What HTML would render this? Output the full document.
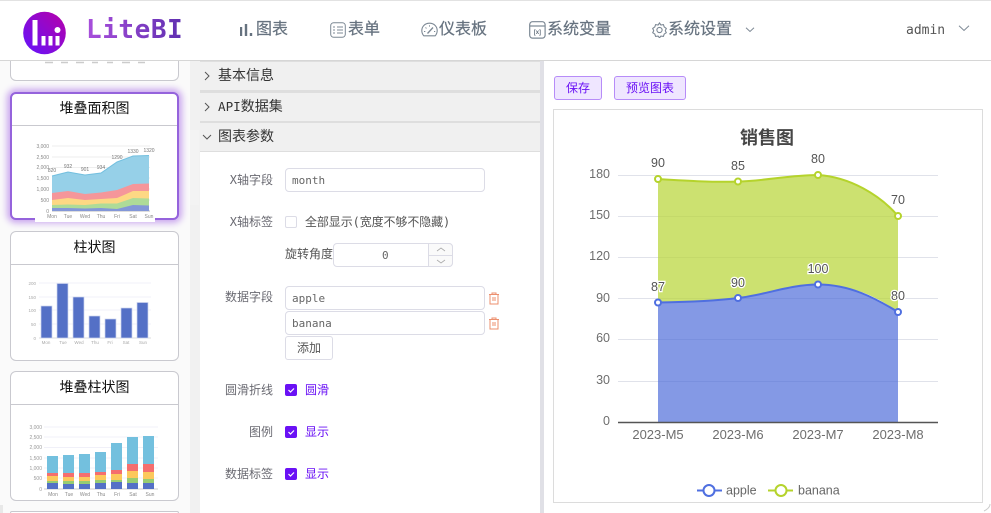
<!DOCTYPE html>
<html><head><meta charset="utf-8">
<style>
*{box-sizing:border-box}
html,body{margin:0;padding:0;width:991px;height:513px;overflow:hidden;background:#fff;font-family:"Liberation Sans","Noto Sans CJK SC",sans-serif}
.abs{position:absolute}
#root{position:relative;width:991px;height:513px;overflow:hidden}
.mono{font-family:"DejaVu Sans Mono","Noto Sans CJK SC",monospace}
.nav{position:absolute;top:19px;font-size:16px;color:#66727f;line-height:22px;white-space:nowrap;-webkit-text-stroke:.2px #66727f}
.card{position:absolute;left:10px;width:169px;background:#fff;border:1px solid #c9c9cf;border-radius:6px;overflow:hidden}
.card .t{height:33px;border-bottom:1px solid #c9c9cf;text-align:center;font-size:14px;line-height:31px;color:#111}
.acc{position:absolute;left:200px;width:340px;background:#f0f0f0;font-size:14px;color:#333;line-height:26px;padding-left:18px;height:28px}
.lab{position:absolute;font-size:12px;color:#6a6a72;text-align:right;width:73px;left:200px;line-height:16px}
.inp{position:absolute;left:285px;width:200px;height:24px;border:1px solid #dcdce6;border-radius:4px;background:#fff;font-size:11px;color:#666;padding-left:6px;line-height:23px}
.cb{position:absolute;left:285px;width:12px;height:12px;border-radius:2px;background:#6a11f5}
.cbt{position:absolute;left:305px;font-size:12px;color:#6a11f5;line-height:16px}
.btn{position:absolute;top:76px;height:24px;background:#efe6ff;border:1px solid #b78cf8;border-radius:3px;color:#6a11f5;font-size:12px;text-align:center;line-height:22px}
</style></head><body>
<div id="root">
<!-- header -->
<div class="abs" style="left:0;top:0;width:991px;height:1px;background:#e2e2e2"></div>
<div class="abs" style="left:0;top:60px;width:991px;height:1px;background:#d6d6d6"></div>
<svg class="abs" style="left:23px;top:11px" width="44" height="44" viewBox="0 0 44 44">
<defs><linearGradient id="lg" x1="0" y1="1" x2="1" y2="0"><stop offset="0.1" stop-color="#6a11f5"/><stop offset="1" stop-color="#b800a8"/></linearGradient></defs>
<circle cx="21.5" cy="22" r="21.3" fill="url(#lg)"/>
<rect x="9.500" y="9" width="5" height="25.500" fill="#fff"/><rect x="18.500" y="25" width="4" height="9.500" fill="#fff"/><rect x="25.500" y="25" width="4" height="9.500" fill="#fff"/><rect x="32.500" y="25" width="4" height="9.500" fill="#fff"/><circle cx="34.500" cy="19" r="3" fill="#fff"/>
</svg>
<div class="abs" style="left:86px;top:14px;font-family:'DejaVu Sans Mono',monospace;font-weight:700;font-size:26px;line-height:32px;letter-spacing:.55px;background:linear-gradient(90deg,#a94fdc,#5f2fb0);-webkit-background-clip:text;background-clip:text;color:transparent">LiteBI</div>

<svg class="abs" style="left:240px;top:24px" width="14" height="12"><path d="M1 3v9M6 0v12M11 9v3" stroke="#66727f" stroke-width="2.400" fill="none"/></svg>
<div class="nav" style="left:256px">图表</div>
<svg class="abs" style="left:330px;top:22px" width="16" height="16" fill="none" stroke="#7c8894"><rect x=".7" y=".7" width="14.600" height="14.600" rx="3"/><path d="M3 5h2M3 8h2M3 11h2M7 5h6M7 8h6M7 11h6" stroke-width="1"/></svg>
<div class="nav" style="left:348px">表单</div>
<svg class="abs" style="left:421px;top:22px" width="17" height="16" viewBox="0 0 17 16" fill="none" stroke="#7c8894" stroke-width="1.100"><path d="M8.500 1.200C4 1.200.8 4.500.8 8.600c0 2.100.8 3.800 2 5.200h11.400c1.200-1.400 2-3.100 2-5.200 0-4.100-3.200-7.400-7.700-7.400Z"/><path d="M6.500 11.500L12 5.500" stroke-width="1.300"/><path d="M3 9.500h1.300M4.500 5.500l1 .9M8.500 3.300v1.300M13 9.500h1.200" stroke-width=".9"/></svg>
<div class="nav" style="left:439px">仪表板</div>
<svg class="abs" style="left:529px;top:21px" width="17" height="18" fill="none" stroke="#7c8894" stroke-width="1.200"><rect x=".7" y=".7" width="15.400" height="16.400" rx="2.800"/><path d="M1 5h15"/><text x="8.400" y="13" font-size="6" stroke="none" fill="#66727f" text-anchor="middle" font-family="Liberation Sans" font-weight="700">[x]</text></svg>
<div class="nav" style="left:547px">系统变量</div>
<svg class="abs" style="left:652px;top:22px" width="15" height="16" viewBox="0 0 15 16" fill="none" stroke="#7c8894" stroke-width="1.100"><path d="M7.500 1l1.400 2 2.500-.4.800 2.300 2.100 1.500-1 2.300 1 2-2.100 1.400-.800 2.300-2.500-.3-1.400 1.700-1.400-1.700-2.500.3-.800-2.300L.7 10.700l1-2-1-2.300 2.100-1.500.8-2.300 2.500.4z"/><circle cx="7.500" cy="8" r="2.600"/></svg>
<div class="nav" style="left:668px">系统设置</div>
<svg class="abs" style="left:745px;top:27px" width="10" height="6"><path d="M1 .8l4 3.700 4-3.700" fill="none" stroke="#7c8894"/></svg>
<div class="abs mono" style="left:906px;top:22px;font-size:13px;color:#555;line-height:17px">admin</div>
<svg class="abs" style="left:958px;top:25px" width="12" height="7"><path d="M1 .8l5 4.700 5-4.700" fill="none" stroke="#7c8894"/></svg>

<!-- sidebar -->
<div class="abs" style="left:0;top:61px;width:190px;height:452px;background:#fafafa"></div>
<div class="abs" style="left:190px;top:61px;width:10px;height:452px;background:#f1f1f1"></div>
<div class="abs" style="left:190px;top:130px;width:9px;height:75px;background:#f3f3f3"></div>
<div class="abs" style="left:0;top:505px;width:3px;height:8px;background:#e8e8e8"></div>

<div class="abs" style="left:10px;top:61px;width:169px;height:20px;background:#fff;border:1px solid #c9c9cf;border-top:0;border-radius:0 0 6px 6px"></div>
<svg class="abs" style="left:40px;top:61px" width="110" height="4"><path d="M5 1.500h8M21 1.500h7M36 1.500h8M52 1.500h6M67 1.500h6M82 1.500h8M98 1.500h7" stroke="#ccc" stroke-width="1.500"/></svg>

<div class="card" style="top:92px;height:128px;border:2px solid #9563dc;box-shadow:0 0 7px 3px #c9a5ee">
<div class="t" style="height:32px;border-bottom:1px solid #c9c9cf;line-height:29px">堆叠面积图</div>
</div>
<svg class="abs" style="left:35px;top:140px" width="120" height="82" viewBox="35 140 120 82">
<rect x="35" y="140" width="120" height="82" fill="#fff"/>
<g stroke="#eee" stroke-width="1"><path d="M52 146h98M52 157h98M52 167.500h98M52 178h98M52 189h98M52 200h98"/></g>
<path d="M52 211h98" stroke="#bbb"/>
<path d="M52 176L68 172 85 175 101 173 117 162 133 156 149 155.500V211H52Z" fill="#96d0e8"/>
<path d="M52 193L68 191 85 194 101 192.500 117 190 133 184 149 183.500V211H52Z" fill="#f5969a"/>
<path d="M52 200L68 198 85 200 101 199 117 198 133 191 149 191V211H52Z" fill="#fdd884"/>
<path d="M52 205L68 204.500 85 205 101 203.500 117 203.500 133 198 149 198.500V211H52Z" fill="#aedb98"/>
<path d="M52 208L68 208 85 208.500 101 208 117 209 133 205 149 205.500V211H52Z" fill="#8397d8"/>
<path d="M52 176L68 172 85 175 101 173 117 162 133 156 149 155.500" fill="none" stroke="#72bfdf"/>
<g font-size="5" fill="#888" font-family="Liberation Sans" text-anchor="end"><text x="49" y="148">3,000</text><text x="49" y="159">2,500</text><text x="49" y="169">2,000</text><text x="49" y="180">1,500</text><text x="49" y="191">1,000</text><text x="49" y="202">500</text><text x="49" y="213">0</text></g>
<g font-size="5" fill="#888" font-family="Liberation Sans" text-anchor="middle"><text x="52" y="218">Mon</text><text x="68" y="218">Tue</text><text x="85" y="218">Wed</text><text x="101" y="218">Thu</text><text x="117" y="218">Fri</text><text x="133" y="218">Sat</text><text x="149" y="218">Sun</text></g>
<g font-size="5" fill="#777" font-family="Liberation Sans" text-anchor="middle"><text x="52" y="172">820</text><text x="68" y="168">932</text><text x="85" y="171">901</text><text x="101" y="169">934</text><text x="117" y="159">1290</text><text x="133" y="153">1330</text><text x="149" y="152">1320</text></g>
</svg>

<div class="card" style="top:231px;height:130px"><div class="t">柱状图</div></div>
<svg class="abs" style="left:25px;top:275px" width="130" height="72" viewBox="25 275 130 72">
<g stroke="#f2f2f8"><path d="M39 283h112M39 297h112M39 310h112M39 324h112"/></g><path d="M39 338h112" stroke="#ddd"/>
<g fill="#5470c6" stroke="#ccd4ee" stroke-width=".7"><rect x="41" y="306" width="11" height="32"/><rect x="57" y="283.500" width="11" height="54.500"/><rect x="73" y="297" width="11" height="41"/><rect x="89" y="316" width="11" height="22"/><rect x="105" y="319" width="11" height="19"/><rect x="121" y="308" width="11" height="30"/><rect x="137" y="302.500" width="11" height="35.500"/></g>
<g font-size="4.500" fill="#aaa" font-family="Liberation Sans" text-anchor="end"><text x="36" y="285">200</text><text x="36" y="299">150</text><text x="36" y="312">100</text><text x="36" y="326">50</text><text x="36" y="340">0</text></g>
<g font-size="4.500" fill="#aaa" font-family="Liberation Sans" text-anchor="middle"><text x="46" y="344">Mon</text><text x="63" y="344">Tue</text><text x="79" y="344">Wed</text><text x="95" y="344">Thu</text><text x="110" y="344">Fri</text><text x="126" y="344">Sat</text><text x="143" y="344">Sun</text></g>
</svg>

<div class="card" style="top:371px;height:130px"><div class="t">堆叠柱状图</div></div>
<svg class="abs" style="left:25px;top:420px" width="140" height="78" viewBox="25 420 140 78">
<g stroke="#f0f0f8"><path d="M44 427h114M44 437h114M44 447.500h114M44 458h114M44 468h114M44 478h114"/></g><path d="M44 489h114" stroke="#ccc"/>
<g id="s">
<rect x="47" y="456" width="11" height="17" fill="#73c0de"/><rect x="47" y="473" width="11" height="3" fill="#f56e6e"/><rect x="47" y="476" width="11" height="5" fill="#fcc85c"/><rect x="47" y="481" width="11" height="2" fill="#97cc72"/><rect x="47" y="483" width="11" height="6" fill="#5470c6"/>
<rect x="63" y="455" width="11" height="18" fill="#73c0de"/><rect x="63" y="473" width="11" height="4" fill="#f56e6e"/><rect x="63" y="477" width="11" height="4" fill="#fcc85c"/><rect x="63" y="481" width="11" height="3" fill="#97cc72"/><rect x="63" y="484" width="11" height="5" fill="#5470c6"/>
<rect x="79" y="454" width="11" height="19" fill="#73c0de"/><rect x="79" y="473" width="11" height="4" fill="#f56e6e"/><rect x="79" y="477" width="11" height="4" fill="#fcc85c"/><rect x="79" y="481" width="11" height="3" fill="#97cc72"/><rect x="79" y="484" width="11" height="5" fill="#5470c6"/>
<rect x="95" y="452" width="11" height="20" fill="#73c0de"/><rect x="95" y="472" width="11" height="3" fill="#f56e6e"/><rect x="95" y="475" width="11" height="5" fill="#fcc85c"/><rect x="95" y="480" width="11" height="3" fill="#97cc72"/><rect x="95" y="483" width="11" height="6" fill="#5470c6"/>
<rect x="111" y="443" width="11" height="27" fill="#73c0de"/><rect x="111" y="470" width="11" height="4" fill="#f56e6e"/><rect x="111" y="474" width="11" height="6" fill="#fcc85c"/><rect x="111" y="480" width="11" height="2" fill="#97cc72"/><rect x="111" y="482" width="11" height="7" fill="#5470c6"/>
<rect x="127" y="437" width="11" height="27" fill="#73c0de"/><rect x="127" y="464" width="11" height="7" fill="#f56e6e"/><rect x="127" y="471" width="11" height="7" fill="#fcc85c"/><rect x="127" y="478" width="11" height="5" fill="#97cc72"/><rect x="127" y="483" width="11" height="6" fill="#5470c6"/>
<rect x="143" y="436" width="11" height="28" fill="#73c0de"/><rect x="143" y="464" width="11" height="8" fill="#f56e6e"/><rect x="143" y="472" width="11" height="7" fill="#fcc85c"/><rect x="143" y="479" width="11" height="4" fill="#97cc72"/><rect x="143" y="483" width="11" height="6" fill="#5470c6"/>
</g>
<g font-size="5" fill="#999" font-family="Liberation Sans" text-anchor="end"><text x="42" y="429">3,000</text><text x="42" y="439">2,500</text><text x="42" y="449">2,000</text><text x="42" y="460">1,500</text><text x="42" y="470">1,000</text><text x="42" y="480">500</text><text x="42" y="491">0</text></g>
<g font-size="5" fill="#888" font-family="Liberation Sans" text-anchor="middle"><text x="53" y="496">Mon</text><text x="69" y="496">Tue</text><text x="85" y="496">Wed</text><text x="101" y="496">Thu</text><text x="117" y="496">Fri</text><text x="133" y="496">Sat</text><text x="150" y="496">Sun</text></g>
</svg>
<div class="abs" style="left:10px;top:511px;width:169px;height:2px;background:#fff;border:1px solid #c9c9cf;border-bottom:0;border-radius:4px 4px 0 0"></div>

<!-- middle -->
<div class="abs" style="left:200px;top:61px;width:340px;height:452px;background:#fff"></div>
<div class="abs" style="left:200px;top:61px;width:340px;height:91px;background:#dedede"></div>
<div class="acc" style="top:62px">基本信息</div>
<div class="acc" style="top:93px"><span class="mono" style="font-size:12.600px">API</span>数据集</div>
<div class="acc" style="top:123px">图表参数</div>
<svg class="abs" style="left:204px;top:71px" width="6" height="10"><path d="M1 1l4 4-4 4" fill="none" stroke="#555"/></svg>
<svg class="abs" style="left:204px;top:102px" width="6" height="10"><path d="M1 1l4 4-4 4" fill="none" stroke="#555"/></svg>
<svg class="abs" style="left:202px;top:134px" width="10" height="6"><path d="M1 1l4 4 4-4" fill="none" stroke="#555"/></svg>

<div class="lab mono" style="top:172px">X轴字段</div>
<div class="inp mono" style="top:168px">month</div>
<div class="lab mono" style="top:214px">X轴标签</div>
<div class="abs" style="left:285px;top:216px;width:12px;height:12px;border:1px solid #dcdce6;border-radius:2px"></div>
<div class="abs mono" style="left:305px;top:214px;font-size:12px;color:#555;line-height:16px;white-space:nowrap;letter-spacing:-.1px">全部显示(宽度不够不隐藏)</div>
<div class="abs" style="left:285px;top:246px;font-size:12px;color:#555;line-height:16px">旋转角度</div>
<div class="abs mono" style="left:333px;top:243px;width:120px;height:24px;border:1px solid #dcdce6;border-radius:4px;background:#fff;font-size:11px;color:#666;line-height:23px;padding-left:48px">0</div>
<div class="abs" style="left:428px;top:243px;width:25px;height:24px;border:1px solid #dcdce6;border-radius:0 4px 4px 0;background:#fafafa"></div>
<div class="abs" style="left:428px;top:255px;width:25px;height:1px;background:#dcdce6"></div>
<svg class="abs" style="left:436px;top:247px" width="10" height="18"><path d="M1 4l4-3 4 3M1 13l4 3 4-3" fill="none" stroke="#aaa" stroke-width=".8"/></svg>

<div class="lab" style="top:289px">数据字段</div>
<div class="inp mono" style="top:286px">apple</div>
<div class="inp mono" style="top:311px">banana</div>
<svg class="abs" style="left:488px;top:292px" width="12" height="13" fill="none" stroke="#ec8f6e"><path d="M1 2.500h10M4 2.500V1h4v1.500M2 2.500V12h8V2.500M5 5v4M7 5v4" stroke-width="1"/></svg>
<svg class="abs" style="left:488px;top:317px" width="12" height="13" fill="none" stroke="#ec8f6e"><path d="M1 2.500h10M4 2.500V1h4v1.500M2 2.500V12h8V2.500M5 5v4M7 5v4" stroke-width="1"/></svg>
<div class="abs" style="left:285px;top:336px;width:48px;height:24px;border:1px solid #dcdce6;border-radius:3px;text-align:center;font-size:12px;color:#555;line-height:22px">添加</div>

<div class="lab" style="top:382px">圆滑折线</div>
<div class="cb" style="top:384px"></div><svg class="abs" style="left:285px;top:384px" width="12" height="12"><path d="M3.500 6l2 2 3.500-3.500" fill="none" stroke="#fff" stroke-width="1.200"/></svg>
<div class="cbt" style="top:382px">圆滑</div>
<div class="lab" style="top:424px">图例</div>
<div class="cb" style="top:426px"></div><svg class="abs" style="left:285px;top:426px" width="12" height="12"><path d="M3.500 6l2 2 3.500-3.500" fill="none" stroke="#fff" stroke-width="1.200"/></svg>
<div class="cbt" style="top:424px">显示</div>
<div class="lab" style="top:466px">数据标签</div>
<div class="cb" style="top:468px"></div><svg class="abs" style="left:285px;top:468px" width="12" height="12"><path d="M3.500 6l2 2 3.500-3.500" fill="none" stroke="#fff" stroke-width="1.200"/></svg>
<div class="cbt" style="top:466px">显示</div>

<!-- splitter -->
<div class="abs" style="left:540px;top:61px;width:4px;height:452px;background:#e0e0e6"></div>

<!-- right -->
<div class="btn" style="left:554px;width:48px">保存</div>
<div class="btn" style="left:614px;width:72px">预览图表</div>
<div class="abs" style="left:553px;top:109px;width:430px;height:394px;border:1px solid #dcdcdc;background:#fff"></div>
<svg class="abs" style="left:554px;top:110px" width="428" height="392" viewBox="554 110 428 392">
<text x="767" y="144" font-size="18" font-weight="700" fill="#464646" text-anchor="middle" font-family="'Liberation Sans','Noto Sans CJK SC',sans-serif">销售图</text>
<g stroke="#e0e2ea"><path d="M618 175.500h320M618 216.500h320M618 257.500h320M618 298.500h320M618 339.500h320M618 381.500h320"/></g>
<path d="M658 179C690 181 715 182.500 738 181.500C765 181 790 175 818 175C850 177 880 195 898 216V312C875 295 850 284.500 818 284.500C790 284.500 765 295 738 298C715 301 690 302 658 302.500Z" fill="#b9d639" fill-opacity=".72"/>
<path d="M658 302.500C690 302 715 301 738 298C765 295 790 284.500 818 284.500C850 284.500 875 298 898 312V422H658Z" fill="#4a69d8" fill-opacity=".68"/>
<path d="M658 179C690 181 715 182.500 738 181.500C765 181 790 175 818 175C850 177 880 195 898 216" fill="none" stroke="#b5d32c" stroke-width="2"/>
<path d="M658 302.500C690 302 715 301 738 298C765 295 790 284.500 818 284.500C850 284.500 875 298 898 312" fill="none" stroke="#4f6fe0" stroke-width="2"/>
<path d="M618 422.500h320" stroke="#555" stroke-width="1.500"/>
<g fill="#fff" stroke="#b5d32c" stroke-width="2"><circle cx="658" cy="179" r="3"/><circle cx="738" cy="181.500" r="3"/><circle cx="818" cy="175" r="3"/><circle cx="898" cy="216" r="3"/></g>
<g fill="#fff" stroke="#4f6fe0" stroke-width="2"><circle cx="658" cy="302.500" r="3"/><circle cx="738" cy="298" r="3"/><circle cx="818" cy="284.500" r="3"/><circle cx="898" cy="312" r="3"/></g>
<g font-size="12.500" fill="#6e6e6e" text-anchor="end" font-family="Liberation Sans"><text x="610" y="178">180</text><text x="610" y="219">150</text><text x="610" y="260">120</text><text x="610" y="302">90</text><text x="610" y="342">60</text><text x="610" y="384">30</text><text x="610" y="425">0</text></g>
<g font-size="13" fill="#6e6e6e" text-anchor="middle" font-family="Liberation Sans"><text x="658" y="439">2023-M5</text><text x="738" y="439">2023-M6</text><text x="818" y="439">2023-M7</text><text x="898" y="439">2023-M8</text></g>
<g font-size="12.500" fill="#555" text-anchor="middle" font-family="Liberation Sans"><text x="658" y="167">90</text><text x="738" y="170">85</text><text x="818" y="163">80</text><text x="898" y="204">70</text></g>
<g font-size="12.500" fill="#555" text-anchor="middle" font-family="Liberation Sans" stroke="#fff" stroke-width="2.500" paint-order="stroke"><text x="658" y="291">87</text><text x="738" y="287">90</text><text x="818" y="273">100</text><text x="898" y="300">80</text></g>
<path d="M697 490.500h25" stroke="#4f6fe0" stroke-width="2"/><circle cx="709" cy="490.500" r="5.500" fill="#fff" stroke="#4f6fe0" stroke-width="2"/>
<text x="726" y="494.500" font-size="12.500" fill="#666" font-family="Liberation Sans">apple</text>
<path d="M768 490.500h25" stroke="#b5d32c" stroke-width="2"/><circle cx="781" cy="490.500" r="5.500" fill="#fff" stroke="#b5d32c" stroke-width="2"/>
<text x="798" y="494.500" font-size="12.500" fill="#666" font-family="Liberation Sans">banana</text>
</svg>
<svg class="abs" style="left:983px;top:503px" width="8" height="10"><path d="M7 1Q7 5 1 8" stroke="#ccc" fill="none"/></svg>
</div>
</body></html>
